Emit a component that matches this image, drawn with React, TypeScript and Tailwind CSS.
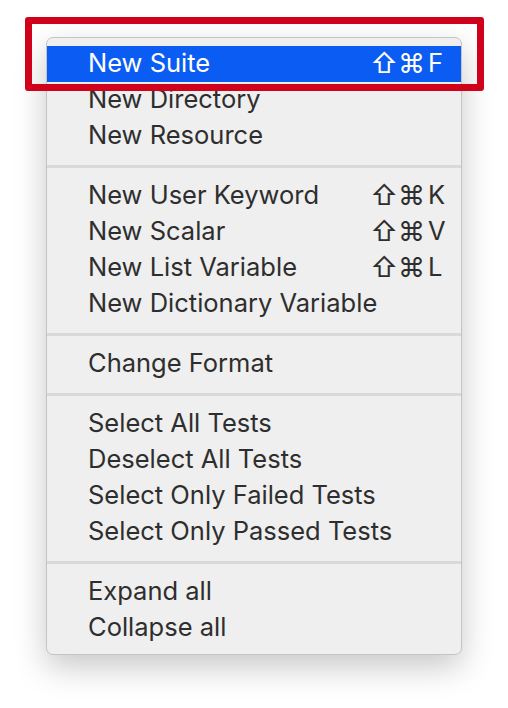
import React from 'react';

type Item = { label: string; shortcut?: string; active?: boolean };

const groups: Item[][] = [
  [
    { label: 'New Suite', shortcut: 'F', active: true },
    { label: 'New Directory' },
    { label: 'New Resource' },
  ],
  [
    { label: 'New User Keyword', shortcut: 'K' },
    { label: 'New Scalar', shortcut: 'V' },
    { label: 'New List Variable', shortcut: 'L' },
    { label: 'New Dictionary Variable' },
  ],
  [{ label: 'Change Format' }],
  [
    { label: 'Select All Tests' },
    { label: 'Deselect All Tests' },
    { label: 'Select Only Failed Tests' },
    { label: 'Select Only Passed Tests' },
  ],
  [{ label: 'Expand all' }, { label: 'Collapse all' }],
];

const MenuRow: React.FC<{ item: Item }> = ({ item }) => (
  <div
    className={`flex h-[36px] items-center justify-between pb-[2px] pl-[41px] pr-[18px] ${
      item.active ? 'bg-[#0b5cf2] text-white' : 'text-[#2e2e2e]'
    }`}
  >
    <span>{item.label}</span>
    {item.shortcut && (
      <span className="flex items-center gap-[3px]">
        <span className="text-[27px]">⇧⌘</span>
        <span className="w-[15px]">{item.shortcut}</span>
      </span>
    )}
  </div>
);

export default function App() {
  return (
    <div className="min-h-[708px] bg-white pl-[46px] pt-[37px]">
      <div
        className="relative w-[416px] rounded-[7px] border border-[#c4c4c4] bg-[#efefef] py-[8px] text-[25.5px] leading-none shadow-[0_12px_32px_rgba(0,0,0,0.22)]"
        style={{ fontFamily: 'Inter, "DejaVu Sans", sans-serif' }}
      >
        {groups.map((group, gi) => (
          <div key={gi}>
            {gi > 0 && (
              <div className="flex h-[24px] items-center">
                <div className="h-[3px] w-full bg-[#d9d9d9]" />
              </div>
            )}
            {group.map((item) => (
              <MenuRow key={item.label} item={item} />
            ))}
          </div>
        ))}
        <div className="pointer-events-none absolute left-[-22px] top-[-21px] h-[74px] w-[459px] rounded-[3px] border-[7px] border-[#d0021b]" />
      </div>
    </div>
  );
}
